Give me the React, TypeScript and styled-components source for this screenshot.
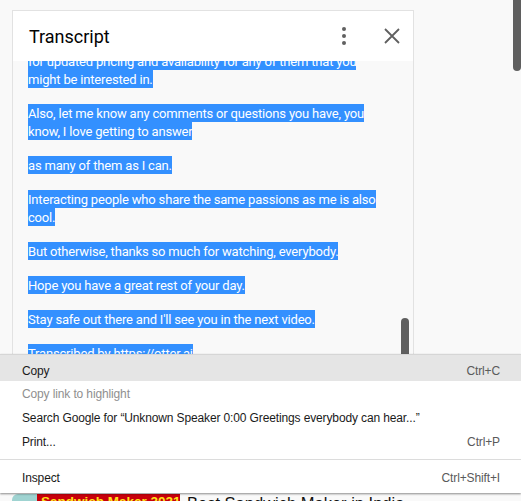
import styled, { createGlobalStyle } from "styled-components";

const GlobalStyle = createGlobalStyle`
  html, body {
    margin: 0;
    padding: 0;
    background: #f9f9f9;
    overflow: hidden;
  }
  * {
    box-sizing: border-box;
  }
`;

const Page = styled.div`
  position: relative;
  width: 521px;
  height: 501px;
  overflow: hidden;
  display: flex;
  flex-direction: row;
  background: #f9f9f9;
`;

const Main = styled.div`
  flex: 1;
  display: flex;
  flex-direction: column;
  padding: 10px 0 0 12px;
`;

const PageScroll = styled.div`
  width: 8px;
  display: flex;
  flex-direction: column;
`;

const PageThumb = styled.div`
  height: 71px;
  background: #5f5f5f;
  border-radius: 0 0 4px 4px;
`;

const Panel = styled.div`
  flex-shrink: 0;
  width: 402px;
  height: 476px;
  border: 1px solid #e2e2e2;
  display: flex;
  flex-direction: column;
  background: #f9f9f9;
`;

const Header = styled.div`
  height: 50px;
  flex-shrink: 0;
  background: #fff;
  display: flex;
  align-items: center;
  padding: 0 9px 0 16px;
  position: relative;
  z-index: 1;
`;

const Title = styled.h2`
  flex: 1;
  margin: 0;
  font-family: Roboto, "Noto Sans", sans-serif;
  font-size: 18px;
  font-weight: 400;
  color: #030303;
`;

const IconButton = styled.button<{ $gap?: number }>`
  width: 24px;
  height: 24px;
  padding: 0;
  border: 0;
  background: transparent;
  display: flex;
  align-items: center;
  justify-content: center;
  margin-left: ${(p) => p.$gap ?? 0}px;
  color: #606060;
`;

const Body = styled.div`
  flex: 1;
  display: flex;
  flex-direction: row;
  overflow: hidden;
  padding: 0 4px 0 15px;
`;

const TextColumn = styled.div<{ $offset: number }>`
  width: 355px;
  margin-right: 18px;
  margin-top: ${(p) => p.$offset}px;
  display: flex;
  flex-direction: column;
  gap: 16px;
`;

const Para = styled.p`
  margin: 0;
  font-family: Roboto, "Noto Sans", sans-serif;
  font-size: 13px;
  letter-spacing: -0.18px;
  line-height: 18px;
  color: #fff;
`;

const Selected = styled.span`
  background: #3390ff;
  padding: 1.5px 0;
`;

const Track = styled.div`
  width: 8px;
  display: flex;
  flex-direction: column;
`;

const Thumb = styled.div`
  margin-top: 257px;
  height: 140px;
  flex-shrink: 0;
  background: #5f5f5f;
  border-radius: 4px 4px 0 0;
`;

const VideoRow = styled.div`
  flex-shrink: 0;
  margin-top: 8px;
  display: flex;
  align-items: flex-start;
`;

const Avatar = styled.div`
  width: 26px;
  height: 40px;
  border-radius: 6px 0 0 0;
  background: #9fd3d1;
  margin-right: -1px;
`;

const Thumbnail = styled.div`
  width: 143px;
  height: 80px;
  overflow: hidden;
  background: #c8000b;
  padding: 1px 0 0 4px;
  font-family: "Liberation Sans", Arial, sans-serif;
  font-weight: 700;
  font-size: 13.5px;
  line-height: 1;
  color: #ffe21a;
  white-space: nowrap;
`;

const VideoTitle = styled.div`
  margin-left: 7px;
  padding-top: 1px;
  font-family: "Liberation Sans", Arial, sans-serif;
  font-size: 16.5px;
  line-height: 1;
  color: #111;
  white-space: nowrap;
`;

const Menu = styled.div`
  position: absolute;
  top: 354px;
  left: 0;
  right: 0;
  height: 139px;
  background: #fff;
  border-top: 1px solid #d6d6d6;
  box-shadow: 0 1px 2px rgba(0, 0, 0, 0.45);
  display: flex;
  flex-direction: column;
  z-index: 5;
`;

const MenuItem = styled.div<{ $active?: boolean; $disabled?: boolean; $tall?: boolean }>`
  height: ${(p) => (p.$tall ? 26 : 24)}px;
  flex-shrink: 0;
  padding: ${(p) => (p.$tall ? "5px" : "2px")} 21px 0 22px;
  display: flex;
  align-items: center;
  justify-content: space-between;
  background: ${(p) => (p.$active ? "#e5e5e5" : "transparent")};
  font-family: "Liberation Sans", Arial, sans-serif;
  font-size: 12px;
  letter-spacing: -0.13px;
  color: ${(p) => (p.$disabled ? "#8f8f8f" : "#1a1a1a")};
  white-space: nowrap;
`;

const Shortcut = styled.span`
  color: #5a5a5a;
`;

const Separator = styled.div`
  height: 12px;
  flex-shrink: 0;
  display: flex;
  align-items: center;
  &::after {
    content: "";
    flex: 1;
    height: 1px;
    background: #dcdcdc;
  }
`;

const paragraphs = [
  "for updated pricing and availability for any of them that you might be interested in.",
  "Also, let me know any comments or questions you have, you know, I love getting to answer ",
  "as many of them as I can.",
  "Interacting people who share the same passions as me is also cool.",
  "But otherwise, thanks so much for watching, everybody.",
  "Hope you have a great rest of your day.",
  "Stay safe out there and I'll see you in the next video.",
  "Transcribed by https://otter.ai",
];

const MoreIcon = () => (
  <svg width="24" height="24" viewBox="0 0 24 24" fill="currentColor">
    <circle cx="12" cy="5" r="2" />
    <circle cx="12" cy="12" r="2" />
    <circle cx="12" cy="19" r="2" />
  </svg>
);

const CloseIcon = () => (
  <svg width="24" height="24" viewBox="0 0 24 24" fill="none" stroke="currentColor" strokeWidth="1.8">
    <path d="M5 5 L19 19 M19 5 L5 19" />
  </svg>
);

export default function App() {
  return (
    <>
      <GlobalStyle />
      <Page>
        <Main>
          <Panel>
            <Header>
              <Title>Transcript</Title>
              <IconButton>
                <MoreIcon />
              </IconButton>
              <IconButton $gap={24}>
                <CloseIcon />
              </IconButton>
            </Header>
            <Body>
              <TextColumn $offset={-9}>
                {paragraphs.map((text, i) => (
                  <Para key={i}>
                    <Selected>{text}</Selected>
                  </Para>
                ))}
              </TextColumn>
              <Track>
                <Thumb />
              </Track>
            </Body>
          </Panel>
          <VideoRow>
            <Avatar />
            <Thumbnail>Sandwich Maker 2021</Thumbnail>
            <VideoTitle>Best Sandwich Maker in India</VideoTitle>
          </VideoRow>
        </Main>
        <PageScroll>
          <PageThumb />
        </PageScroll>
        <Menu>
          <MenuItem $active $tall>
            <span>Copy</span>
            <Shortcut>Ctrl+C</Shortcut>
          </MenuItem>
          <MenuItem $disabled>
            <span>Copy link to highlight</span>
          </MenuItem>
          <MenuItem>
            <span>Search Google for “Unknown Speaker 0:00 Greetings everybody can hear...”</span>
          </MenuItem>
          <MenuItem>
            <span>Print...</span>
            <Shortcut>Ctrl+P</Shortcut>
          </MenuItem>
          <Separator />
          <MenuItem>
            <span>Inspect</span>
            <Shortcut>Ctrl+Shift+I</Shortcut>
          </MenuItem>
        </Menu>
      </Page>
    </>
  );
}
